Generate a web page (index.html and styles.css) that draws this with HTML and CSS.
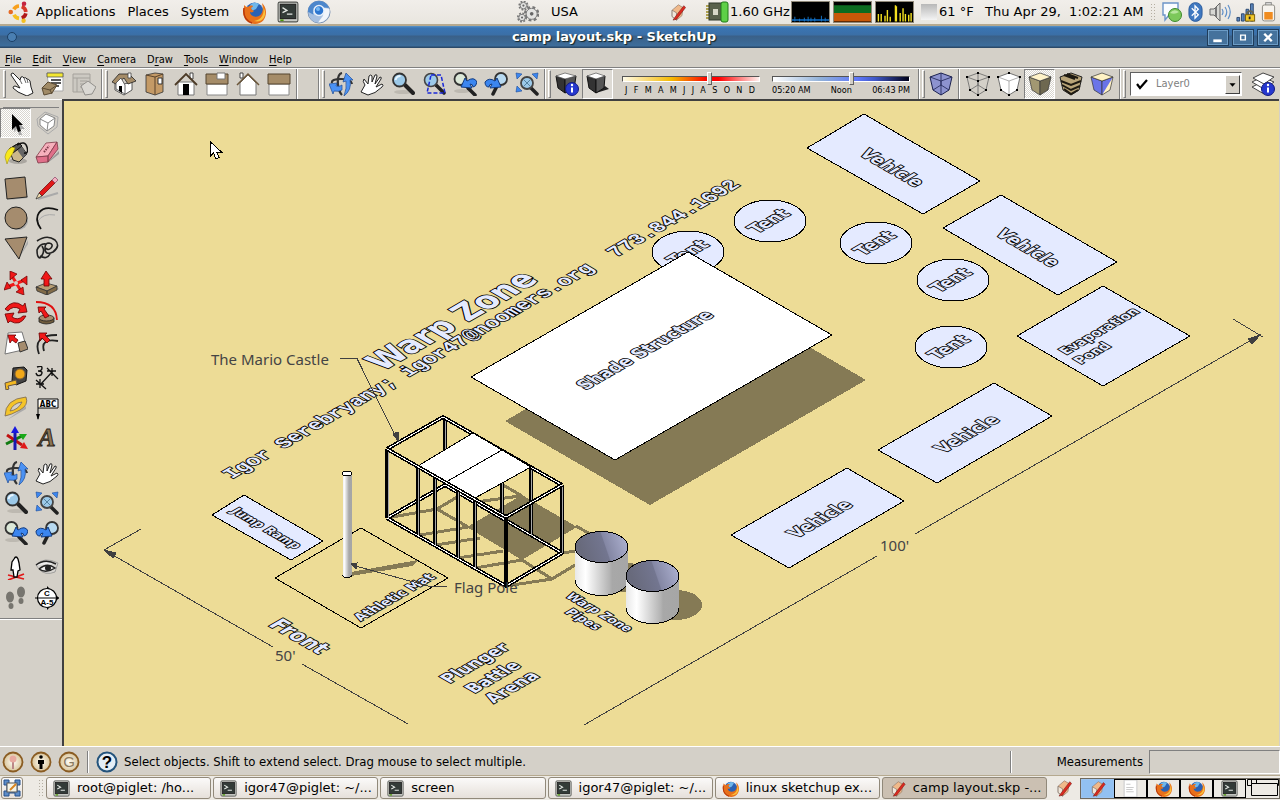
FILE: index.html
```html
<!DOCTYPE html>
<html lang="en">
<head>
<meta charset="utf-8">
<title>camp layout.skp - SketchUp</title>
<link rel="stylesheet" href="styles.css">
</head>
<body>
<svg class="defs" aria-hidden="true">
<defs>
<linearGradient id="g-pipe"><stop offset="0" stop-color="#e8e8e8"/><stop offset=".2" stop-color="#fff"/><stop offset=".65" stop-color="#b4b4b4"/><stop offset=".7" stop-color="#a8a8a8"/><stop offset="1" stop-color="#a6a6a6"/></linearGradient>
<linearGradient id="g-in" x2="1" y2="-.2"><stop offset="0" stop-color="#686a7c"/><stop offset=".45" stop-color="#737690"/><stop offset=".47" stop-color="#8487a4"/><stop offset="1" stop-color="#b6bada"/></linearGradient>
<radialGradient id="g-ring"><stop offset="0" stop-color="#fffdf6"/><stop offset="1" stop-color="#d8c49a"/></radialGradient>
<symbol id="i-term" viewBox="0 0 20 20"><rect x="1" y="1" width="18" height="18" rx="1.500" fill="#c9cbc6" stroke="#555753"/><rect x="3" y="3" width="14" height="13" fill="#333b38" stroke="#222"/><path d="M5 6l4 2.500-4 2M9 12h5" fill="none" stroke="#e4e8e4" stroke-width="1.200"/><path d="M3 17.500h3" stroke="#4e9a06" stroke-width="1.500"/></symbol>
<symbol id="i-fox" viewBox="0 0 24 24"><circle cx="12.500" cy="11.500" r="9" fill="#2a62b4"/><path d="M8 5q4-4 9-1l-3 5-4 2z" fill="#6fb7ea"/><path d="M2 5c0 3 0 3-1 6C1 19 6 24 13 24s11-5 11-12c0-4-2-7-4-9 1 4 2 10-3 13-5 2-9-1-9-4 2 1 3 0 4-1-2-1-3-2-3-3 1-1 2-1 2-2-2-1-4 0-5 1C5 7 4 7 2 5z" fill="#e8701a"/><path d="M21 6c2 7-1 14-9 15 7 2 12-3 11-10z" fill="#fbc03a"/><path d="M2 8c-1 8 2 13 8 15" fill="none" stroke="#b8380c" stroke-width="1.500"/></symbol>
<symbol id="i-chrome" viewBox="0 0 24 24"><circle cx="12" cy="12" r="11" fill="#b9cee8" stroke="#7c93b4"/><path d="M1 12C1 5 6 1 12 1s9 4 10 7l-10-1-6 5 1 5z" fill="#4d87cc"/><path d="M22.500 9c1 7-4 13.500-11.500 13.500l5-6.500 1-8z" fill="#f2f5fa"/><path d="M1.500 12c0 6 4 10 9.500 10.500l4-6.500-8-1z" fill="#a6bfe0"/><circle cx="12" cy="10.500" r="5" fill="#2d76d0" stroke="#e8f0fa" stroke-width="1.500"/><circle cx="11" cy="9" r="2" fill="#75b8f4"/></symbol>
<symbol id="i-ubuntu" viewBox="0 0 24 24"><g fill="none" stroke-width="4"><path d="M6.300 9A7 7 0 0 1 12 5.500" stroke="#f8a01c"/><path d="M15 6A7 7 0 0 1 19.500 12" stroke="#d8392a"/><path d="M19.500 13.500A7 7 0 0 1 15 18.500" stroke="#b01818"/><path d="M12 19A7 7 0 0 1 6.500 15" stroke="#f4c020"/></g><circle cx="3" cy="12" r="2.500" fill="#e66a24"/><circle cx="17.500" cy="3" r="2.500" fill="#c42440"/><circle cx="17" cy="21.500" r="2.400" fill="#f4c020"/></symbol>
<symbol id="i-skp" viewBox="0 0 18 20"><path d="M3 8l7-6 5 3-1 9-6 5-5-4z" fill="#f0b98a" stroke="#8c7465" stroke-width=".7"/><path d="M3 8l5 3v8l-5-4z" fill="#efe6da" stroke="#75675f" stroke-width=".7"/><path d="M16 3L6 16l-2 3 4-1L18 5z" fill="#dc2a20" stroke="#701510" stroke-width=".6"/></symbol>
<symbol id="i-gears" viewBox="0 0 24 24"><g fill="#e4e4e2" stroke="#777"><circle cx="16" cy="14" r="7" fill="none" stroke-dasharray="3 2.500" stroke-width="3"/><circle cx="16" cy="14" r="6"/><circle cx="7" cy="5" r="4.500" fill="none" stroke-dasharray="2 1.500" stroke-width="2"/><circle cx="7" cy="5" r="3.500"/><circle cx="5.500" cy="18" r="4.500" fill="none" stroke-dasharray="2 1.500" stroke-width="2"/><circle cx="5.500" cy="18" r="3.500"/></g><g fill="#666"><circle cx="16" cy="14" r="2"/><circle cx="7" cy="5" r="1.200"/><circle cx="5.500" cy="18" r="1.200"/></g></symbol>
<symbol id="i-chip" viewBox="0 0 24 22"><path d="M1 5h5M1 8h5M1 11h5M1 14h5M1 17h5" stroke="#9a8a20" stroke-width="1.500"/><rect x="4" y="2" width="13" height="17" fill="#59614c" stroke="#30382a"/><rect x="8" y="8" width="5" height="6" fill="#d8d8c8"/><rect x="16" y="1" width="7" height="20" rx="2" fill="#5ed047" stroke="#207a18"/></symbol>
<symbol id="i-chat" viewBox="0 0 22 22"><path d="M2 2h15v12H8l-4 5v-5H2z" fill="#fafcff" stroke="#6c94c8" stroke-width="1.400"/><circle cx="14" cy="14" r="6.500" fill="#7cc85a" stroke="#3d8a2c"/><path d="M9 12q4-5 9-1-4 3-9 1" fill="#b9e6a0"/></symbol>
<symbol id="i-bt" viewBox="0 0 16 22"><rect x="1" y="1" width="14" height="20" rx="7" fill="#3f78c0" stroke="#285a9c"/><path d="M4 7l7 7-3.500 3.500v-13L11 8l-7 7" fill="none" stroke="#fff" stroke-width="1.400"/></symbol>
<symbol id="i-vol" viewBox="0 0 22 22"><path d="M1 8h4l6-6v18l-6-6H1z" fill="#d8d8d4" stroke="#666"/><path d="M7 6v10" stroke="#777" stroke-width="2"/><path d="M13 8q2 3 0 6M16 6q3.500 5 0 10M19 4q4.500 7 0 14" fill="none" stroke="#5f8fc8" stroke-width="1.200"/></symbol>
<symbol id="i-net" viewBox="0 0 22 22"><g fill="#5c86bc" stroke="#24426c"><path d="M1 17h3v4H1zM6 13h3v8H6zM11 8h3v13h-3zM16 2h3v19h-3z"/></g><path d="M12 14q0-4 3.500-4t3.500 4" fill="none" stroke="#665" stroke-width="2"/><rect x="10.500" y="14" width="10" height="7" fill="#f2c828" stroke="#765a08"/><path d="M15 16v3" stroke="#222" stroke-width="2"/></symbol>
<symbol id="i-bat" viewBox="0 0 16 22"><rect x="5" y="1" width="6" height="3" fill="#ddd" stroke="#888"/><rect x="1.500" y="3.500" width="13" height="17" rx="2" fill="#f6f3ee" stroke="#8a8780"/><rect x="3.500" y="11" width="9" height="8" fill="#f08c20"/></symbol>

<symbol id="i-select2" viewBox="0 0 24 24"><path d="M1 3q0-2 2-2l7 7 1-3q2-1 3 1 2-1 3 1 2 0 3 2l1 6 2 6-6 3-9-4-5-4q0-2 2-2l5 2z" fill="#fff" stroke="#222"/><path d="M10 8l2 4M14 6l2 5M17 7l1 4" stroke="#666" fill="none"/></symbol>
<symbol id="i-material" viewBox="0 0 24 24"><path d="M6 1h16v18H8z" fill="#fff" stroke="#aaa"/><path d="M6 1h16v4H6z" fill="#f4e832" stroke="#555" stroke-width=".8"/><path d="M10 8h10M10 11h10M10 14h8" stroke="#222" stroke-width="1.500"/><path d="M1 16l6-6 9 3-5 8-8 2z" fill="#a08a66" stroke="#5a4a32"/><path d="M1 16l8 2 7-5M9 18l2 4" fill="none" stroke="#5a4a32"/></symbol>
<symbol id="i-material-off" viewBox="0 0 24 24"><path d="M1 2h17v18H1z" fill="#ccc9c2" stroke="#a5a29c"/><path d="M1 6h17M5 6v14M8 9h7M8 12h7M8 15h7" stroke="#a5a29c"/><path d="M9 14l7-5 8 6-4 7-7 1z" fill="#dad8d3" stroke="#918f8b"/></symbol>
<symbol id="i-iso" viewBox="0 0 24 24"><path d="M3 10v8l9 5 8-5v-8l-8 2z" fill="#fff" stroke="#333" stroke-width=".8"/><path d="M0 10L7 2h10l7 7-8 3-4-6-8 6z" fill="#a58c68" stroke="#222" stroke-width=".8"/><path d="M4 11l5-5 4 7v9l-9-5z" fill="#fff" stroke="#444" stroke-width=".8"/><path d="M7 14h3v7l-3-2z"/><path d="M16 1h3v5h-3z" fill="#fff" stroke="#444" stroke-width=".8"/></symbol>
<symbol id="i-top" viewBox="0 0 24 24"><path d="M3 3l9-2 8 1v18l-8 3-9-3z" fill="#c49a66" stroke="#333" stroke-width=".8"/><path d="M12 5v18M3 3l9 2 8-3" stroke="#5b432a" fill="none"/><path d="M15 6h4v6h-4z" fill="#fff" stroke="#333"/></symbol>
<symbol id="i-front" viewBox="0 0 24 24"><path d="M4 10h16v13H4z" fill="#fff" stroke="#777"/><path d="M16 1h3v6h-3z" fill="#fff" stroke="#444"/><path d="M1 13L12 2l11 11" fill="none" stroke="#4c3a26" stroke-width="1.800"/><path d="M9 12h6v11H9z"/></symbol>
<symbol id="i-right" viewBox="0 0 24 24"><path d="M2 12h20v11H2z" fill="#fff" stroke="#888"/><path d="M1 2h22v10H1z" fill="#a58c68" stroke="#54442e"/><path d="M12 1h8v6h-8z" fill="#fff" stroke="#777"/></symbol>
<symbol id="i-back" viewBox="0 0 24 24"><path d="M4 11L12 3l8 8v12H4z" fill="#fff" stroke="#777"/><path d="M4 1h3v5H4z" fill="#fff" stroke="#444"/><path d="M1 13L12 2l11 11" fill="none" stroke="#6b5538" stroke-width="1.500"/></symbol>
<symbol id="i-left" viewBox="0 0 24 24"><path d="M2 12h20v11H2z" fill="#fff" stroke="#888"/><path d="M1 2h22v10H1z" fill="#a58c68" stroke="#54442e"/></symbol>
<symbol id="i-orbit" viewBox="0 0 24 24"><path d="M13 1q-5 1-4 12 1 7 4 10M3 11Q2 7 12 7t11 5" fill="none" stroke="#333" stroke-width="2.200"/><path d="M0 12l8-1-1 3q4 1 6-1v5q-3 2-8 1l-1 3z" fill="#4b92f4" stroke="#1d4c98" stroke-width=".7"/><path d="M17 1l7 7-3 0q2 10-6 16 3-8 2-15l-3 1z" fill="#4b92f4" stroke="#1d4c98" stroke-width=".7"/></symbol>
<symbol id="i-pan" viewBox="0 0 24 24"><path d="M1 20l4-7q-3-4-1-6l4 5 1-8q2-2 3 0v6l3-7q2-1 2 1l-2 8 5-7q2 0 1 2l-5 8 6-3q2 1 0 3-7 7-14 8z" fill="#fff" stroke="#222"/></symbol>
<symbol id="i-zoom" viewBox="0 0 24 24"><ellipse cx="12" cy="20" rx="9" ry="2" fill="#bdb9b1"/><path d="M14 13l8 8" stroke="#222" stroke-width="4" stroke-linecap="round"/><circle cx="8.500" cy="8" r="6.500" fill="#9cc9e8" stroke="#333" stroke-width="1.800"/><path d="M4.500 8q1-4 5-4" stroke="#e8f6ff" stroke-width="2" fill="none"/></symbol>
<symbol id="i-zoomwin" viewBox="0 0 24 24"><path d="M14 13l8 8" stroke="#222" stroke-width="3.500" stroke-linecap="round"/><circle cx="9" cy="8" r="6.500" fill="#9cc9e8" stroke="#444" stroke-width="1.600"/><path d="M9 3h10l4 18H5z" fill="none" stroke="#1a28d8" stroke-width="1.500" stroke-dasharray="4 2"/></symbol>
<symbol id="i-prev" viewBox="0 0 24 24"><ellipse cx="9" cy="19" rx="8" ry="2" fill="#bdb9b1"/><path d="M15 16l7 7" stroke="#222" stroke-width="3.500" stroke-linecap="round"/><circle cx="7.500" cy="7" r="6" fill="#dce8d8" stroke="#333" stroke-width="1.800"/><path d="M8 15l4-9 2 3q7-5 10 1-1 5-4 5 0-3-3-3l2 4z" fill="#3b86f0" stroke="#123b80"/></symbol>
<symbol id="i-next" viewBox="0 0 24 24"><path d="M13 14l-4 8" stroke="#222" stroke-width="3.500" stroke-linecap="round"/><circle cx="17" cy="7" r="6" fill="#b7d9f0" stroke="#333" stroke-width="1.800"/><path d="M17 15l-4-9-2 3Q5 5 1 10q0 5 4 5 0-3 3-3l-2 4z" fill="#3b86f0" stroke="#123b80"/></symbol>
<symbol id="i-extents" viewBox="0 0 24 24"><path d="M15 15l7 7" stroke="#222" stroke-width="3.500" stroke-linecap="round"/><circle cx="12" cy="11" r="6" fill="#9cc9e8" stroke="#444" stroke-width="1.800"/><path d="M9 8l6 6M15 8l-6 6" stroke="#5583a0"/><path d="M1 1l6 1-5 5zM23 1l-6 1 5 5zM1 20l1-6 5 5z" fill="#3b86f0" stroke="#1d4c98" stroke-width=".6"/></symbol>
<symbol id="i-shadowset" viewBox="0 0 24 24"><path d="M1 4l9 2v15l-7-5z" fill="#333" stroke="#111"/><path d="M10 6l11-2-2 13-9 4z" fill="#555" stroke="#111"/><path d="M1 4l9-3 11 3-11 3z" fill="#fff" stroke="#555" stroke-width=".7"/><circle cx="17" cy="17" r="6.500" fill="#2638cf" stroke="#111a80"/><path d="M17 15.500v5" stroke="#fff" stroke-width="2"/><circle cx="17" cy="13" r="1.200" fill="#fff"/></symbol>
<symbol id="i-shadow" viewBox="0 0 24 24"><path d="M10 21l13-4-4-3z" fill="#222"/><path d="M1 4l9 2v15l-7-5z" fill="#333" stroke="#111"/><path d="M10 6l9-2-1 12-8 5z" fill="#555" stroke="#111"/><path d="M1 4l9-3 9 3-9 3z" fill="#fff" stroke="#555" stroke-width=".7"/></symbol>
<symbol id="i-xray" viewBox="0 0 24 24"><path d="M1 5l11-4 11 4-3 13-8 5-8-5z" fill="#8d93cf" stroke="#1c2250"/><path d="M1 5l11 4 11-4M12 9v14M12 1v12L4 18M12 13l8 5" fill="none" stroke="#1c2250" stroke-width=".8"/></symbol>
<symbol id="i-wire" viewBox="0 0 24 24"><path d="M1 5l11-4 11 4-3 13-8 5-8-5zM1 5l11 4 11-4M12 9v14M12 1v12L4 18M12 13l8 5" fill="none" stroke="#666" stroke-width=".8"/><path d="M0 4h2v2H0zM22 4h2v2h-2zM11 0h2v2h-2zM11 8h2v2h-2zM11 22h2v2h-2zM3 17h2v2H3zM19 17h2v2h-2z"/></symbol>
<symbol id="i-hidden" viewBox="0 0 24 24"><path d="M1 5l11-4 11 4-3 13-8 5-8-5z" fill="#fff" stroke="#555" stroke-width=".8"/><path d="M1 5l11 4 11-4M12 9v14" fill="none" stroke="#999" stroke-width=".8"/><path d="M0 4h2v2H0zM22 4h2v2h-2zM11 0h2v2h-2zM11 22h2v2h-2zM3 17h2v2H3zM19 17h2v2h-2z"/></symbol>
<symbol id="i-shaded" viewBox="0 0 24 24"><path d="M1 5l11 4v14l-8-5z" fill="#a29872" stroke="#333" stroke-width=".7"/><path d="M12 9l11-4-3 13-8 5z" fill="#6e6850" stroke="#333" stroke-width=".7"/><path d="M1 5l11-4 11 4-11 4z" fill="#fff3c8" stroke="#333" stroke-width=".7"/></symbol>
<symbol id="i-texture" viewBox="0 0 24 24"><path d="M1 5l11-4 11 4-3 13-8 5-8-5z" fill="#b8a478" stroke="#222"/><path d="M5 3l11 4M8 2l11 4M2 9l10 4 10-4M3 13l9 5 9-4M5 17l7 5 7-4" stroke="#1e1a12" stroke-width="2" fill="none"/></symbol>
<symbol id="i-mono" viewBox="0 0 24 24"><path d="M1 5l11 4v14l-8-5z" fill="#6a74e8" stroke="#333" stroke-width=".7"/><path d="M12 9l11-4-3 13-8 5z" fill="#fff2c4"/><path d="M12 23V9l11-4z" fill="#6a74e8"/><path d="M12 9l11-4-3 13-8 5z" fill="none" stroke="#333" stroke-width=".7"/><path d="M1 5l11-4 11 4-11 4z" fill="#fff2c4" stroke="#333" stroke-width=".7"/></symbol>
<symbol id="i-layers" viewBox="0 0 24 24"><g fill="#fff" stroke="#444"><path d="M1 15l10-5 12 5-10 7z"/><path d="M1 10l10-5 12 5-10 7z"/><path d="M2 6l10-5 11 4-10 7z"/></g><circle cx="17" cy="17" r="6.500" fill="#2638cf" stroke="#111a80"/><path d="M17 15.500v5" stroke="#fff" stroke-width="2"/><circle cx="17" cy="13" r="1.200" fill="#fff"/></symbol>

<symbol id="i-arrow" viewBox="0 0 24 24"><path d="M10 6v15l3-3 2 6h3l-2-6h5z" fill="#aaa"/><path d="M8 3v16l4-4 2 6 3-1-2-6h4z" fill="#000"/></symbol>
<symbol id="i-component" viewBox="0 0 24 24"><path d="M2 8l8-7 13 5-1 10-9 7-10-8z" fill="none" stroke="#aaa"/><path d="M5 8l6-5 9 4-1 8-7 5-7-6z" fill="#fff" stroke="#888"/><path d="M5 8l8 4 7-5M13 12l-1 8" fill="none" stroke="#888"/></symbol>
<symbol id="i-paint" viewBox="0 0 24 24"><ellipse cx="14" cy="20" rx="9" ry="3" fill="#aaa6a0"/><path d="M5 8l10-6 8 11-8 8-6-2z" fill="#cbb78a" stroke="#222"/><path d="M15 2l8 11-4 4-8-11z" fill="#666"/><path d="M5 8l10-6 3 3-9 7z" fill="#555" stroke="#111"/><path d="M13 4q8-5 10 2t-3 6" fill="none" stroke="#111" stroke-width="1.500"/><path d="M8 6Q2 9 1 16l2 7 2-5q4-5 6-11z" fill="#f8e81c" stroke="#a09010" stroke-width=".6"/></symbol>
<symbol id="i-eraser" viewBox="0 0 24 24"><path d="M10 24l14-11v-3z" fill="#999"/><path d="M11 2l11-1-9 14-12 1z" fill="#f7b0bc" stroke="#7c3a48" stroke-width=".8"/><path d="M1 16l12-1v6l-10 1zM22 1l1 7-10 13v-6z" fill="#e0708a" stroke="#7c3a48" stroke-width=".8"/><path d="M9 11l5-6" stroke="#7c3a48" stroke-width="2" stroke-dasharray="1.500 1"/></symbol>
<symbol id="i-rect" viewBox="0 0 24 24"><path d="M4 24l20-4v2z" fill="#aaa"/><path d="M1 3l20-2 2 20-20 2z" fill="#a58c6e" stroke="#222"/></symbol>
<symbol id="i-line" viewBox="0 0 24 24"><path d="M3 23l20-6" stroke="#aaa" stroke-width="2"/><path d="M4 17L17 4l3 3L7 20z" fill="#e01818" stroke="#600" stroke-width=".7"/><path d="M17 4l3-3 3 3-3 3z" fill="#f4b0c0" stroke="#846" stroke-width=".7"/><path d="M4 17l-3 6 6-3z" fill="#f4dfb0" stroke="#222" stroke-width=".7"/></symbol>
<symbol id="i-circle" viewBox="0 0 24 24"><ellipse cx="14" cy="15" rx="10" ry="9" fill="#aaa"/><circle cx="12" cy="12" r="11" fill="#a58c6e" stroke="#222"/></symbol>
<symbol id="i-arc" viewBox="0 0 24 24"><path d="M3 15Q8 7 20 9" fill="none" stroke="#aaa"/><path d="M6 23C-3 12 4-3 23 4" fill="none" stroke="#111" stroke-width="1.800"/></symbol>
<symbol id="i-poly" viewBox="0 0 24 24"><path d="M15 22L24 4v4z" fill="#aaa"/><path d="M1 3l22-2-8 22z" fill="#a58c6e" stroke="#222"/></symbol>
<symbol id="i-free" viewBox="0 0 24 24"><path d="M2 5Q12-2 20 4q6 6-2 12-8 4-8-4 0-5 4-5 5 1 2 5-3 3-5 0M11 8q-6-1-9 6 0 8 3 8 6-6 2-12M5 20q7 4 10-2" fill="none" stroke="#222" stroke-width="1.600"/></symbol>
<symbol id="i-move" viewBox="0 0 24 24"><path d="M6 24l18-6z" fill="#aaa"/><path d="M8 5l9 15M3 16l18-7" stroke="#f01818" stroke-width="3"/><g fill="#f01818" stroke="#600" stroke-width=".7"><path d="M6 0l7 3-7 6zM23 5v9l-6-5zM20 24l-8-3 7-5zM0 19l3-8 4 6z"/></g><circle cx="12" cy="12" r="2" fill="#d4d0c8"/></symbol>
<symbol id="i-push" viewBox="0 0 24 24"><path d="M8 24l16-6-3-3z" fill="#aaa"/><path d="M1 16l10-4 11 3-10 5z" fill="#b89e74" stroke="#333" stroke-width=".8"/><path d="M1 16l11 4v4L2 20zM12 20l10-5v4l-10 5z" fill="#826b48" stroke="#333" stroke-width=".8"/><path d="M9 15V8H6l5-8 6 8h-3v7z" fill="#f01818" stroke="#600" stroke-width=".8"/></symbol>
<symbol id="i-rotate" viewBox="0 0 24 24"><path d="M1 8Q9-3 19 5l2-3 2 9-9 1 2-4Q9 4 4 10zM22 15q-6 11-16 5l-2 2-3-9 9-1-2 4q6 4 11-1z" fill="#f01818" stroke="#600" stroke-width=".8"/></symbol>
<symbol id="i-follow" viewBox="0 0 24 24"><path d="M1 1q20 0 21 18" fill="none" stroke="#e01010" stroke-width="1.800"/><path d="M4 17v4q7 4 15 0v-4z" fill="#6f5b3c" stroke="#222" stroke-width=".8"/><ellipse cx="11.500" cy="17" rx="7.500" ry="3" fill="#a58c6e" stroke="#222" stroke-width=".8"/><path d="M3 6l8 0-2 2 5 7-4 2-4-7-2 2z" fill="#f01818" stroke="#600" stroke-width=".8"/></symbol>
<symbol id="i-scale" viewBox="0 0 24 24"><path d="M4 2l14-1 5 17-22 5z" fill="#fff" stroke="#777"/><path d="M14 12l7-2 3 8-8 3z" fill="#a58c6e" stroke="#333"/><path d="M4 4l8 0-2 2 4 3-2 3-4-3-2 3z" fill="#f01818" stroke="#600" stroke-width=".8"/></symbol>
<symbol id="i-offset" viewBox="0 0 24 24"><path d="M4 23Q-3 4 22 4M9 20Q5 7 23 10" fill="none" stroke="#222" stroke-width="1.800"/><path d="M4 2l8 0-2 2 5 5-3 3-5-5-2 3z" fill="#f01818" stroke="#600" stroke-width=".8"/></symbol>
<symbol id="i-tape" viewBox="0 0 24 24"><path d="M9 2l11-1 3 3-1 11-10 4-4-4z" fill="#444" stroke="#111"/><circle cx="16" cy="8" r="5" fill="#f2a818" stroke="#863"/><path d="M1 17l11-3 1 4-9 2 1 3-3 1z" fill="#f2b820" stroke="#654"/></symbol>
<symbol id="i-dim" viewBox="0 0 24 24"><path d="M5 19L18 5M11 23L1 14M23 13L12 2M5 13v9M1 18h8M17 2v8M12 5h9" fill="none" stroke="#111" stroke-width="1.300"/><path d="M2 1q5-2 5 1T3 5q6 0 3 4-4 2-5-2" fill="none" stroke="#111" stroke-width="1.400"/></symbol>
<symbol id="i-prot" viewBox="0 0 24 24"><path d="M3 24l19-14v3z" fill="#aaa"/><path d="M1 20Q1 3 22 1q3 8-6 13T1 20zM6 15q8-1 12-9Q9 7 6 15z" fill="#f4c428" stroke="#765" fill-rule="evenodd" stroke-width=".8"/></symbol>
<symbol id="i-axes" viewBox="0 0 24 24"><path d="M2 18l16-8" stroke="#107a10" stroke-width="3"/><path d="M3 9l15 10" stroke="#c01010" stroke-width="3"/><path d="M11 24V6" stroke="#1818b0" stroke-width="3"/><path d="M7 7l4-7 4 7z" fill="#1818e0"/><path d="M24 23l-8-1 4-6z" fill="#e01818"/><path d="M15 8l8 0-4 6z" fill="#18a818"/></symbol>
<symbol id="i-walk" viewBox="0 0 24 24"><path d="M4 19l16 4M4 24l16-6" stroke="#e01818" stroke-width="1.800"/><path d="M10 3q2-4 4 0l1 4 1 7-2 1-1 6h-3l-1-7-2 0 1-8z" fill="#fff" stroke="#000" stroke-width="1.300"/></symbol>
<symbol id="i-look" viewBox="0 0 24 24"><path d="M1 9Q9 0 23 7l-3 9q-10 4-16-3z" fill="#d7d5d1" stroke="#888" stroke-width=".7"/><path d="M1 9Q10 2 21 8M4 13q8-7 16-1-9 6-16 1" fill="#eee" stroke="#222" stroke-width="1.500"/><circle cx="13" cy="12" r="3" fill="#222"/></symbol>
<symbol id="i-feet" viewBox="0 0 24 24"><g fill="#77756f"><ellipse cx="6" cy="11" rx="4" ry="5.500"/><ellipse cx="7" cy="20" rx="2.500" ry="3"/><ellipse cx="17" cy="6" rx="4" ry="5.500"/><ellipse cx="17" cy="15" rx="2.500" ry="3"/></g></symbol>
<symbol id="i-info" viewBox="0 0 22 22"><circle cx="11" cy="11" r="9.500" fill="url(#g-ring)" stroke="#8a5c22" stroke-width="1.800"/></symbol>
</defs>
</svg>

<header class="panel">
  <nav class="panel-menus" aria-label="Desktop">
    <svg class="ic22"><use href="#i-ubuntu"/></svg>
    <button class="flat">Applications</button>
    <button class="flat">Places</button>
    <button class="flat">System</button>
    <button class="launch" aria-label="Browser"><svg class="ic24"><use href="#i-fox"/></svg></button>
    <button class="launch" aria-label="Terminal"><svg class="ic22"><use href="#i-term"/></svg></button>
    <button class="launch" aria-label="Web"><svg class="ic24"><use href="#i-chrome"/></svg></button>
  </nav>
  <div class="panel-tray">
    <svg class="ic22"><use href="#i-gears"/></svg>
    <span class="kbd">USA</span>
    <svg class="skp"><use href="#i-skp"/></svg>
    <svg class="chip"><use href="#i-chip"/></svg>
    <span class="ghz">1.60 GHz</span>
    <svg class="graph" viewBox="0 0 39 20"><rect width="39" height="20"/><path d="M0 18.500h39" stroke="#08549c" stroke-width="2"/><path d="M3 20v-5M8 20v-3M13 20v-4M17 20v-5M20 20v-4M24 20v-4M31 20v-6M35 20v-4" stroke="#1878c8"/></svg>
    <svg class="graph" viewBox="0 0 39 20"><rect width="39" height="20"/><path d="M0 3h39v8H0z" fill="#0c6c20"/><path d="M0 11h39v9H0z" fill="#c85808"/></svg>
    <svg class="graph" viewBox="0 0 39 20"><rect width="39" height="20"/><path d="M2.500 20v-8M5.500 20v-8M9.500 20v-6M12 20V8M15 20v-5M20.500 20V3M21.500 20V4M25.500 20v-9M28.500 20V6M31 20v-8M34.500 20v-7M37 20v-9" stroke="#f4e020" stroke-width="1.500"/></svg>
    <span class="fog"></span>
    <span class="temp">61 °F</span>
    <time class="clock">Thu Apr 29,&nbsp; 1:02:21 AM</time>
    <span class="grip"></span>
    <svg class="ic22 chat"><use href="#i-chat"/></svg>
    <svg class="narrow"><use href="#i-bt"/></svg>
    <svg class="ic22"><use href="#i-vol"/></svg>
    <svg class="ic20"><use href="#i-net"/></svg>
    <svg class="narrow"><use href="#i-bat"/></svg>
  </div>
</header>

<div class="titlebar">
  <button class="orb" aria-label="Window menu"></button>
  <h1>camp layout.skp - SketchUp</h1>
  <div class="winbtns">
    <button aria-label="Minimize"><svg viewBox="0 0 20 16"><path d="M5 11.500h9" stroke="#fff" stroke-width="3"/></svg></button>
    <button aria-label="Maximize"><svg viewBox="0 0 20 16"><path d="M7.500 5.500h5v5h-5z" fill="none" stroke="#fff" stroke-width="1.500"/></svg></button>
    <button aria-label="Close"><svg viewBox="0 0 20 16"><path d="M6 4l8 8M14 4l-8 8" stroke="#fff" stroke-width="2.500"/></svg></button>
  </div>
</div>

<nav class="menubar" aria-label="Application">
  <button><u>F</u>ile</button><button><u>E</u>dit</button><button><u>V</u>iew</button><button><u>C</u>amera</button><button>D<u>r</u>aw</button><button><u>T</u>ools</button><button><u>W</u>indow</button><button><u>H</u>elp</button>
</nav>

<div class="toolbar">
  <i class="handle"></i>
  <button class="tool" aria-label="Interact"><svg><use href="#i-select2"/></svg></button>
  <button class="tool" aria-label="Materials"><svg><use href="#i-material"/></svg></button>
  <button class="tool" aria-label="Options"><svg><use href="#i-material-off"/></svg></button>
  <i class="edge"></i><i class="handle"></i>
  <button class="tool" aria-label="Iso"><svg><use href="#i-iso"/></svg></button>
  <button class="tool" aria-label="Top"><svg><use href="#i-top"/></svg></button>
  <button class="tool" aria-label="Front view"><svg><use href="#i-front"/></svg></button>
  <button class="tool" aria-label="Right"><svg><use href="#i-right"/></svg></button>
  <button class="tool" aria-label="Back"><svg><use href="#i-back"/></svg></button>
  <button class="tool" aria-label="Left"><svg><use href="#i-left"/></svg></button>
  <i class="edge"></i><i class="edge blank"></i><i class="handle"></i>
  <button class="tool" aria-label="Orbit"><svg><use href="#i-orbit"/></svg></button>
  <button class="tool" aria-label="Pan"><svg><use href="#i-pan"/></svg></button>
  <button class="tool" aria-label="Zoom"><svg><use href="#i-zoom"/></svg></button>
  <button class="tool" aria-label="Zoom Window"><svg><use href="#i-zoomwin"/></svg></button>
  <button class="tool" aria-label="Previous"><svg><use href="#i-prev"/></svg></button>
  <button class="tool" aria-label="Next"><svg><use href="#i-next"/></svg></button>
  <button class="tool" aria-label="Zoom Extents"><svg><use href="#i-extents"/></svg></button>
  <i class="edge"></i><i class="handle"></i>
  <button class="tool" aria-label="Shadow Settings"><svg><use href="#i-shadowset"/></svg></button>
  <button class="tool on" aria-label="Shadows"><svg><use href="#i-shadow"/></svg></button>
  <div class="slide">
    <input class="months" type="range" aria-label="Date" min="0" max="100" value="64">
    <div class="ticks"><span>J</span><span>F</span><span>M</span><span>A</span><span>M</span><span>J</span><span>J</span><span>A</span><span>S</span><span>O</span><span>N</span><span>D</span></div>
  </div>
  <div class="slide">
    <input class="hours" type="range" aria-label="Time" min="0" max="100" value="58">
    <div class="ticks"><span>05:20 AM</span><span>Noon</span><span>06:43 PM</span></div>
  </div>
  <i class="edge"></i><i class="handle"></i>
  <button class="tool" aria-label="X-Ray"><svg><use href="#i-xray"/></svg></button>
  <i class="edge"></i>
  <button class="tool" aria-label="Wireframe"><svg><use href="#i-wire"/></svg></button>
  <button class="tool" aria-label="Hidden Line"><svg><use href="#i-hidden"/></svg></button>
  <button class="tool on dither" aria-label="Shaded"><svg><use href="#i-shaded"/></svg></button>
  <button class="tool" aria-label="Textures"><svg><use href="#i-texture"/></svg></button>
  <button class="tool" aria-label="Monochrome"><svg><use href="#i-mono"/></svg></button>
  <i class="edge"></i><i class="handle last"></i>
  <div class="combo">
    <svg class="tick" viewBox="0 0 12 12"><path d="M1 6l3 4 7-8" fill="none" stroke="#000" stroke-width="2.200"/></svg>
    <select aria-label="Layer"><option>Layer0</option></select>
    <svg class="drop" viewBox="0 0 15 18"><path d="M4 7.500h7l-3.500 4z"/></svg>
  </div>
  <button class="tool" aria-label="Layers"><svg><use href="#i-layers"/></svg></button>
</div>

<main class="work">
  <aside class="palette">
    <div class="pair">
      <button class="tool on dither" aria-label="Select"><svg><use href="#i-arrow"/></svg></button>
      <button class="tool" aria-label="Component"><svg><use href="#i-component"/></svg></button>
      <button class="tool" aria-label="Paint"><svg><use href="#i-paint"/></svg></button>
      <button class="tool" aria-label="Eraser"><svg><use href="#i-eraser"/></svg></button>
    </div>
    <div class="pair">
      <button class="tool" aria-label="Rectangle"><svg><use href="#i-rect"/></svg></button>
      <button class="tool" aria-label="Line"><svg><use href="#i-line"/></svg></button>
      <button class="tool" aria-label="Circle"><svg><use href="#i-circle"/></svg></button>
      <button class="tool" aria-label="Arc"><svg><use href="#i-arc"/></svg></button>
      <button class="tool" aria-label="Polygon"><svg><use href="#i-poly"/></svg></button>
      <button class="tool" aria-label="Freehand"><svg><use href="#i-free"/></svg></button>
    </div>
    <div class="pair">
      <button class="tool" aria-label="Move"><svg><use href="#i-move"/></svg></button>
      <button class="tool" aria-label="Push/Pull"><svg><use href="#i-push"/></svg></button>
      <button class="tool" aria-label="Rotate"><svg><use href="#i-rotate"/></svg></button>
      <button class="tool" aria-label="Follow Me"><svg><use href="#i-follow"/></svg></button>
      <button class="tool" aria-label="Scale"><svg><use href="#i-scale"/></svg></button>
      <button class="tool" aria-label="Offset"><svg><use href="#i-offset"/></svg></button>
    </div>
    <div class="pair">
      <button class="tool" aria-label="Tape Measure"><svg><use href="#i-tape"/></svg></button>
      <button class="tool" aria-label="Dimension"><svg><use href="#i-dim"/></svg></button>
      <button class="tool" aria-label="Protractor"><svg><use href="#i-prot"/></svg></button>
      <button class="tool" aria-label="Text"><svg viewBox="0 0 24 24"><path d="M3 23V3h20v9H3" fill="#fff" stroke="#000"/><path d="M1 18h4l-2 6z"/><text class="abc" x="13" y="11">ABC</text></svg></button>
      <button class="tool" aria-label="Axes"><svg><use href="#i-axes"/></svg></button>
      <button class="tool" aria-label="3D Text"><svg class="open" viewBox="0 0 24 24"><text class="big-a" x="12" y="20">A</text></svg></button>
    </div>
    <div class="pair">
      <button class="tool" aria-label="Orbit view"><svg><use href="#i-orbit"/></svg></button>
      <button class="tool" aria-label="Pan view"><svg><use href="#i-pan"/></svg></button>
      <button class="tool" aria-label="Zoom view"><svg><use href="#i-zoom"/></svg></button>
      <button class="tool" aria-label="Extents"><svg><use href="#i-extents"/></svg></button>
      <button class="tool" aria-label="Previous view"><svg><use href="#i-prev"/></svg></button>
      <button class="tool" aria-label="Next view"><svg><use href="#i-next"/></svg></button>
    </div>
    <div class="pair">
      <button class="tool" aria-label="Position Camera"><svg><use href="#i-walk"/></svg></button>
      <button class="tool" aria-label="Look Around"><svg><use href="#i-look"/></svg></button>
      <button class="tool" aria-label="Walk"><svg><use href="#i-feet"/></svg></button>
      <button class="tool" aria-label="Section Plane"><svg viewBox="0 0 24 24"><path d="M12 0l12 12-12 12z"/><circle cx="12" cy="12" r="9.500" fill="#fff" stroke="#000" stroke-width="1.200"/><path d="M0 12h24" stroke="#000"/><text class="sec" x="12" y="10">C</text><text class="sec" x="12" y="19">A-5</text></svg></button>
    </div>
  </aside>

  <svg class="scene" viewBox="64 101 1215 645" preserveAspectRatio="xMinYMin slice" role="img" aria-label="Camp layout model">
    <g class="ground">
      <path d="M722 296L866 380 650 505 505 421z"/>
      <path d="M522 495L577 527 522 560 467 527z"/>
      <ellipse cx="676" cy="605" rx="26" ry="15"/>
      <ellipse cx="622" cy="577" rx="26" ry="15"/>
      <path d="M351 572L418 560 412 566 351 576z"/>
    </g>
    <path class="shadowline" d="M387 518l50-9 22-13M437 509l31 18M420 535l48-8M436 545l44-7M458 558l45-7M475 568l47-8M506 586l46-7 28-17M522 560l30 19M476 502l44-6M503 485l19 11M562 553l20-3M576 526l14 8"/>
    <g class="tile">
      <path d="M864 114L980 181 923 214 807 148z"/>
      <path d="M1001 195L1117 262 1058 295 943 228z"/>
      <path d="M1103 286L1190 336 1103 386 1017 336z"/>
      <path d="M994 383L1052 416 937 483 878 450z"/>
      <path d="M847 468L904 501 789 568 731 535z"/>
      <path d="M244 495L323 541 291 560 212 515z"/>
      <ellipse cx="688" cy="252" rx="36" ry="21"/>
      <ellipse cx="770" cy="221" rx="36" ry="21"/>
      <ellipse cx="876" cy="243" rx="36" ry="21"/>
      <ellipse cx="953" cy="280" rx="36" ry="21"/>
      <ellipse cx="951" cy="347" rx="36" ry="21"/>
    </g>
    <path class="outline" d="M361 528L448 578 361 628 275 578z"/>
    <!-- labels lying on the ground plane: isometric axes -->
    <g class="label t18">
      <text transform="matrix(.866 -.5 .866 .5 688 252)" y="6">Tent</text>
      <text transform="matrix(.866 -.5 .866 .5 769 221)" y="6">Tent</text>
      <text transform="matrix(.866 -.5 .866 .5 875 243)" y="6">Tent</text>
      <text transform="matrix(.866 -.5 .866 .5 951 280)" y="6">Tent</text>
      <text transform="matrix(.866 -.5 .866 .5 949 347)" y="6">Tent</text>
      <text transform="matrix(.866 -.5 .866 .5 967 434)" y="6">Vehicle</text>
      <text transform="matrix(.866 -.5 .866 .5 820 519)" y="6">Vehicle</text>
      <text transform="matrix(.866 .5 -.866 .5 892 168)" y="6">Vehicle</text>
      <text transform="matrix(.866 .5 -.866 .5 1028 248)" y="6">Vehicle</text>
      <text transform="matrix(.866 -.5 .866 .5 475 663)" y="6">Plunger</text>
      <text transform="matrix(.866 -.5 .866 .5 493 677)" y="6">Battle</text>
      <text transform="matrix(.866 -.5 .866 .5 512 687)" y="6">Arena</text>
    </g>
    <g class="label t22"><text transform="matrix(.866 .5 -.866 .5 300 636)" y="8">Front</text></g>
    <g class="label t14">
      <text transform="matrix(.866 -.5 .866 .5 1099 331)" y="5">Evaporation</text>
      <text transform="matrix(.866 -.5 .866 .5 1092 353)" y="5">Pond</text>
      <text transform="matrix(.866 -.5 .866 .5 394 597)" y="5">Athletic Mat</text>
    </g>
    <g class="label t13">
      <text transform="matrix(.866 .5 -.866 .5 267 528)" y="5">Jump Ramp</text>
      <text transform="matrix(.866 .5 -.866 .5 600 612)" y="5">Warp Zone</text>
      <text transform="matrix(.866 .5 -.866 .5 584 619)" y="5">Pipes</text>
    </g>
    <g class="label t33"><text transform="matrix(.866 -.5 .866 .5 451 320)" y="12">Warp Zone</text></g>
    <g class="label mono"><text transform="matrix(.866 -.5 .866 .5 232 479)" xml:space="preserve">Igor Serebryany; igor47@noomers.org  773.844.1692</text></g>
    <path class="roof" d="M688 252L832 335 615 460 471 377z"/>
    <g class="label t18"><text transform="matrix(.866 -.5 .866 .5 645 350)" y="6">Shade Structure</text></g>

    <g class="beam">
      <path d="M445 417v67M387 518l58-33 117 68M502 450v68M531 468v68"/>
      <path class="core" d="M387 518l58-33 117 68"/>
      <path class="core gray" d="M445 417v67M502 450v68M531 468v68"/>
      <path d="M387 449L443 417 562 485"/>
      <path class="core" d="M387 449L443 417 562 485"/>
    </g>
    <path class="roof" d="M473 433L531 467 475 498 418 466zM502 450L446 482"/>
    <g class="beam">
      <path d="M387 449v69M387 518l119 68 56-33V485M418 466v69M435 476v69M458 489v69M475 499v69"/>
      <path class="core gray" d="M388 449v69M418 466v69M435 476v69M458 489v69M475 499v69M562 485v68"/>
      <path class="core" d="M387 518l119 68 56-33"/>
      <path d="M387 449L506 517 562 485M506 517v69"/>
      <path class="core" d="M387 449L506 517 562 485"/>
    </g>

    <path d="M342.500 474v101a4.500 2.500 0 0 0 9 0v-101z" fill="url(#g-pipe)"/>
    <path class="outline" d="M342.500 575a4.500 2.500 0 0 0 9 0"/>
    <ellipse class="cap" cx="347" cy="473.500" rx="4.500" ry="2.500"/>

    <path d="M575 547v33a26.500 15.500 0 0 0 53 0v-33z" fill="url(#g-pipe)"/>
    <path class="outline" d="M575 580a26.500 15.500 0 0 0 53 0"/>
    <ellipse cx="601.500" cy="547" rx="26.500" ry="15.500" fill="url(#g-in)" stroke="#000"/>
    <path d="M626 576v32a26.500 15.500 0 0 0 53 0v-32z" fill="url(#g-pipe)"/>
    <path class="outline" d="M626 608a26.500 15.500 0 0 0 53 0"/>
    <ellipse cx="652.500" cy="576" rx="26.500" ry="15.500" fill="url(#g-in)" stroke="#000"/>

    <g class="dim">
      <path d="M104 550l37-21M104 550l169 97M302 664l106 60M1233 319l30 18M1260 335L915 534M877 556L584 725M340 358.500h17L398 441M447 586.500h-17L352 565"/>
      <path class="head" d="M104 550l12 3-3 5zM1260 335l-12 4 4 5zM399 442l-6-8 5-2zM351 564l6-1-1 6z"/>
      <text x="211" y="365">The Mario Castle</text>
      <text x="454" y="593">Flag Pole</text>
      <text x="275" y="661">50'</text>
      <text x="880" y="551">100'</text>
    </g>
    <path d="M210 141.500v15l3.500-3.500 2.500 6 3-1.500-2.500-5.500h5z" fill="#fff" stroke="#000"/>
  </svg>
</main>

<div class="status">
  <svg class="ic22"><use href="#i-info"/><path d="M11 10v8" stroke="#b88" stroke-width="2"/><circle cx="11" cy="8" r="3.500" fill="#e8aaa0"/></svg>
  <svg class="ic22"><use href="#i-info"/><circle cx="11" cy="6" r="1.800"/><path d="M8 9h6v4h-1.500v5h-3v-5H8z"/></svg>
  <svg class="ic22" viewBox="0 0 22 22"><use href="#i-info"/><text class="cr" x="11" y="16">G</text></svg>
  <i class="edge"></i>
  <svg class="ic22 help" viewBox="0 0 22 22"><circle cx="11" cy="11" r="9.500" fill="#e4eef6" stroke="#24547c" stroke-width="2"/><text class="q" x="11" y="17">?</text></svg>
  <p>Select objects. Shift to extend select. Drag mouse to select multiple.</p>
  <i class="edge"></i>
  <label for="vcb">Measurements</label>
  <input id="vcb" type="text">
</div>

<footer class="taskbar">
  <button class="task desk" aria-label="Show desktop"><svg class="ic20" viewBox="0 0 20 20"><path d="M2 2h5v4h6V2h5v5h-3v6h3v5h-5v-3H7v3H2v-5h3V7H2z" fill="#5c8cc8" stroke="#24508c"/><rect x="5" y="5" width="10" height="9" fill="#f4f4e8" stroke="#555"/><path d="M8 12l6-6" stroke="#d88420" stroke-width="2"/></svg></button>
  <span class="grip"></span>
  <div class="tasks">
    <button class="task"><svg><use href="#i-term"/></svg>root@piglet: /ho...</button>
    <button class="task"><svg><use href="#i-term"/></svg>igor47@piglet: ~/...</button>
    <button class="task"><svg><use href="#i-term"/></svg>screen</button>
    <button class="task"><svg><use href="#i-term"/></svg>igor47@piglet: ~/...</button>
    <button class="task"><svg><use href="#i-fox"/></svg>linux sketchup ex...</button>
    <button class="task active"><svg><use href="#i-skp"/></svg>camp layout.skp -...</button>
  </div>
  <svg class="skp"><use href="#i-skp"/></svg>
  <div class="spaces">
    <button class="cur" aria-label="Workspace 1"><svg><use href="#i-skp"/></svg></button>
    <button aria-label="Workspace 2"><svg viewBox="0 0 16 16"><path d="M2 0h12v16H2z" fill="#fff" stroke="#ccc"/><path d="M4 4h4M4 7h7M4 9h6M4 11h7" stroke="#ccc"/></svg></button>
    <button aria-label="Workspace 3"><svg><use href="#i-fox"/></svg></button>
    <button aria-label="Workspace 4"><svg><use href="#i-fox"/></svg></button>
    <button aria-label="Workspace 5"><svg><use href="#i-term"/></svg></button>
    <button class="multi" aria-label="Workspace 6"><svg viewBox="0 0 32 18"><path d="M.5.500h9v6h-9zM4.500.500h27v6h-27z" fill="#edeae4" stroke="#000"/><path d="M4.500 4.500h26v12h-26z" fill="#edeae4" stroke="#000"/></svg></button>
  </div>
</footer>
</body>
</html>
```

FILE: styles.css
```css
* { box-sizing: border-box; }
html, body { height: 100%; margin: 0; }
body {
  display: flex;
  flex-direction: column;
  overflow: hidden;
  background: #d4d0c8;
  color: #000;
  font: 13px/16px "DejaVu Sans", sans-serif;
}
button { margin: 0; padding: 0; border: 0; background: none; color: inherit; font: inherit; }
svg { display: block; flex: none; }
.defs { position: absolute; width: 0; height: 0; }
.ic24 { width: 24px; height: 24px; }
.ic22 { width: 22px; height: 22px; }
.ic20 { width: 20px; height: 20px; }
.narrow { width: 15px; height: 22px; }
.skp { width: 17px; height: 18px; }

/* desktop panel */
.panel {
  display: flex;
  flex: none;
  justify-content: space-between;
  height: 26px;
  padding: 0 4px 0 8px;
  background: linear-gradient(#f1eeea, #e9e6df);
  border-bottom: 2px solid #b5a98f;
}
.panel-menus, .panel-tray { display: flex; align-items: center; white-space: nowrap; }
.flat { margin: 0 6px; }
.launch { margin-left: 7px; }
.launch + .launch { margin-left: 11px; }
.launch:last-child { margin-left: 8px; }
.kbd { width: 130px; padding-left: 12px; }
.chip { width: 24px; height: 22px; margin-left: 19px; }
.ghz { width: 62px; padding-left: 1px; }
.graph { width: 39px; height: 22px; margin-right: 3px; border: 1px solid #8f8878; background: #000; }
.fog { width: 16px; height: 16px; margin-left: 4px; background: linear-gradient(#b8b8b8, #f4f4f4); }
.temp { width: 48px; padding-left: 2px; }
.clock { width: 165px; }
.grip {
  width: 6px;
  height: 18px;
  background: radial-gradient(circle, #b4aea2 1px, transparent 1px) 0 0 / 3px 3px;
}
.chat { margin-left: 5px; }
.panel-tray .narrow { margin-left: 5px; }
.panel-tray .narrow + .ic22 { margin-left: 6px; }
.panel-tray .ic20 { margin-left: 5px; }

/* window frame */
.titlebar {
  display: flex;
  flex: none;
  align-items: center;
  height: 22px;
  padding: 0 1px 0 7px;
  background: linear-gradient(#5a94c8, #3a74b2 2px, #3b6fa6 9px, #3a6088 10px, #3d6d9b 20px, #2b4a6a 21px);
}
.titlebar h1 {
  flex: 1;
  margin: 0;
  padding-left: 4px;
  text-align: center;
  color: #fff;
  font-size: 13px;
  line-height: 18px;
  text-shadow: 1px 1px 1px #122;
}
.orb { width: 10px; height: 10px; border: 1px solid #1c4066; border-radius: 50%; background: #4a7fb2; }
.winbtns { display: flex; gap: 3px; }
.winbtns button { width: 22px; height: 17px; border: 1px solid #1f3c5a; box-shadow: inset 0 0 0 1px #6c9cc6; background: #45729c; }
.winbtns svg { width: 20px; height: 15px; }

.menubar {
  display: flex;
  flex: none;
  gap: 11px;
  height: 20px;
  padding: 3px 5px 0;
  border-bottom: 1px solid #808080;
  font: 11px/15px "DejaVu Sans Condensed", "DejaVu Sans", sans-serif;
}
.menubar u { text-underline-offset: 2px; }

/* tool bars */
.toolbar {
  display: flex;
  flex: none;
  align-items: center;
  height: 31px;
  padding-left: 3px;
  border-top: 1px solid #fff;
}
.tool { display: grid; flex: none; place-items: center; width: 31px; height: 30px; }
.tool svg { width: 24px; height: 24px; }
.tool .open { overflow: visible; }
.on { border: 1px solid; border-color: #808080 #fff #fff #808080; background: #dedbd5; }
.dither {
  background: conic-gradient(#fff 25%, #d9d6cf 0 50%, #fff 0 75%, #d9d6cf 0) 0 0 / 2px 2px;
}
.handle { flex: none; width: 3px; height: 28px; border: 1px solid; border-color: #fff #808080 #808080 #fff; background: #d4d0c8; }
.handle.last { margin-right: 4px; }
.edge { flex: none; width: 2px; height: 30px; margin: 0 2px; border-left: 1px solid #808080; background: #fff; }
.edge.blank { margin-left: 18px; }
.slide { display: flex; flex: none; flex-direction: column; width: 138px; height: 24px; margin-left: 9px; overflow: hidden; }
.slide + .slide { margin: 0 6px 0 12px; }
.slide input { flex: none; appearance: none; width: 138px; height: 13px; margin: 0; background: none; }
.slide input::-webkit-slider-runnable-track { height: 6px; border: 1px solid; border-color: #555 #fff #fff #555; }
.months::-webkit-slider-runnable-track { background: linear-gradient(90deg, #fffbe8, #f4b800 36%, #f00 62%, #f00 70%, #fff0ee); }
.hours::-webkit-slider-runnable-track { background: linear-gradient(90deg, #fff, #90b0d8 35%, #6078f8 62%, #4058c8 75%, #000018); }
.slide input::-webkit-slider-thumb { appearance: none; width: 5px; height: 13px; margin-top: -5px; border: 1px solid; border-color: #fff #606060 #606060 #fff; background: #d4d0c8; }
.ticks { display: flex; justify-content: space-between; padding: 0 5px 0 3px; font: 9px/10px "DejaVu Sans Condensed", "DejaVu Sans", sans-serif; }
.slide + .slide .ticks { padding: 0; }
.combo {
  display: flex;
  flex: none;
  align-items: center;
  width: 112px;
  height: 24px;
  margin-right: 5px;
  padding: 1px;
  border: 1px solid;
  border-color: #606060 #fff #fff #606060;
  background: #fff;
}
.tick { width: 12px; height: 12px; margin: 0 4px; }
.combo select { flex: 1; min-width: 0; appearance: none; padding: 0 4px; border: 0; background: none; color: #808080; font: 11px/16px "DejaVu Sans Condensed", "DejaVu Sans", sans-serif; }
.drop { width: 15px; height: 19px; border: 1px solid; border-color: #fff #404040 #404040 #fff; background: #d4d0c8; }

.work { display: flex; flex: 1; min-height: 0; border-bottom: 1px solid #fff; }
.palette { flex: none; width: 62px; padding-top: 8px; border-top: 1px solid #fff; }
.palette .pair:first-child { box-shadow: 0 -4px 0 -3px #808080; }
.pair { display: grid; grid-template-columns: 31px 31px; margin-bottom: 5px; }
.pair:last-child { padding-bottom: 5px; border-bottom: 1px solid #808080; box-shadow: 0 1px 0 #fff; }
.abc { font: bold 8px "DejaVu Sans Condensed", sans-serif; text-anchor: middle; }
.big-a { font: italic bold 26px "Liberation Serif", serif; text-anchor: middle; fill: #8c7454; stroke: #2c2418; }
.sec { font: bold 8px "Liberation Sans", sans-serif; text-anchor: middle; }

/* model view */
.scene { flex: 1; min-width: 0; height: 100%; margin-right: 1px; border: solid #404040; border-width: 2px 0 0 2px; background: #eddc96; shape-rendering: crispEdges; }
.ground { fill: #857a55; }
.shadowline { fill: none; stroke: #857a55; stroke-width: 3; }
.tile { fill: #e4eaff; stroke: #000; }
.outline { fill: none; stroke: #000; }
.roof, .cap { fill: #fff; stroke: #000; }
.beam { fill: none; stroke: #000; stroke-width: 4; }
.beam .core { stroke: #fff; stroke-width: 1; }
.beam .core.gray { stroke: #a8a8a8; }
.label { fill: #e4eaff; stroke: #000; stroke-width: 2; paint-order: stroke; font-family: "DejaVu Sans Condensed", "DejaVu Sans", sans-serif; font-weight: bold; text-anchor: middle; }
.t13 { font-size: 13px; }
.t14 { font-size: 14px; }
.t18 { font-size: 18px; }
.t22 { font-size: 22px; }
.t33 { font-size: 33px; }
.mono { font-family: "Liberation Mono", monospace; font-size: 20px; text-anchor: start; }
.dim { fill: #444; font: 15px "Noto Sans", sans-serif; }
.dim path { fill: none; stroke: #404040; }
.dim .head { fill: #404040; }

.status { display: flex; flex: none; align-items: center; height: 28px; padding: 2px 0 0 2px; gap: 6px; }
.status .edge { height: 22px; margin: 0 1px; }
.status p { flex: 1; margin: 0; font: 13px/16px "DejaVu Sans Condensed", "DejaVu Sans", sans-serif; }
.status label { width: 88px; margin-left: 36px; text-align: right; font: 13px/16px "DejaVu Sans Condensed", "DejaVu Sans", sans-serif; }
.status input { width: 131px; height: 24px; border: 1px solid; border-color: #808080 #fff #fff #808080; background: #d4d0c8; }
.cr, .q { text-anchor: middle; font: 15px "Liberation Sans", sans-serif; fill: #8a7a60; }
.q { font-weight: bold; font-size: 17px; fill: #000; }

.taskbar { display: flex; flex: none; align-items: center; height: 25px; padding: 0 0 0 1px; background: #edeae4; border-top: 1px solid #b5a98f; }
.taskbar .grip { margin: 0 2px 0 15px; }
.task { display: flex; align-items: center; min-width: 0; height: 22px; border: 1px solid #91897a; border-radius: 3px; background: linear-gradient(#fbfaf9, #e6e0da); white-space: nowrap; }
.desk { flex: none; width: 22px; }
.tasks { display: flex; flex: 1; gap: 2px; min-width: 0; }
.tasks .task { flex: 1; padding-left: 6px; overflow: hidden; }
.task > svg:not(.ic20) { width: 17px; height: 17px; margin-right: 7px; }
.task.active { background: #cbc0b2; }
.taskbar > .skp { margin: 0 8px; }
.spaces { display: flex; flex: none; border: 1px solid #6f6a60; }
.spaces button { display: grid; place-items: center; width: 33px; height: 19px; border: 1px solid #000; overflow: hidden; }
.spaces svg { width: 17px; height: 17px; }
.spaces .cur { border-color: #9cc4f0; background: #92c1f2; }
.spaces .multi { border: 0; }
.spaces .multi svg { width: 32px; height: 18px; }
```
